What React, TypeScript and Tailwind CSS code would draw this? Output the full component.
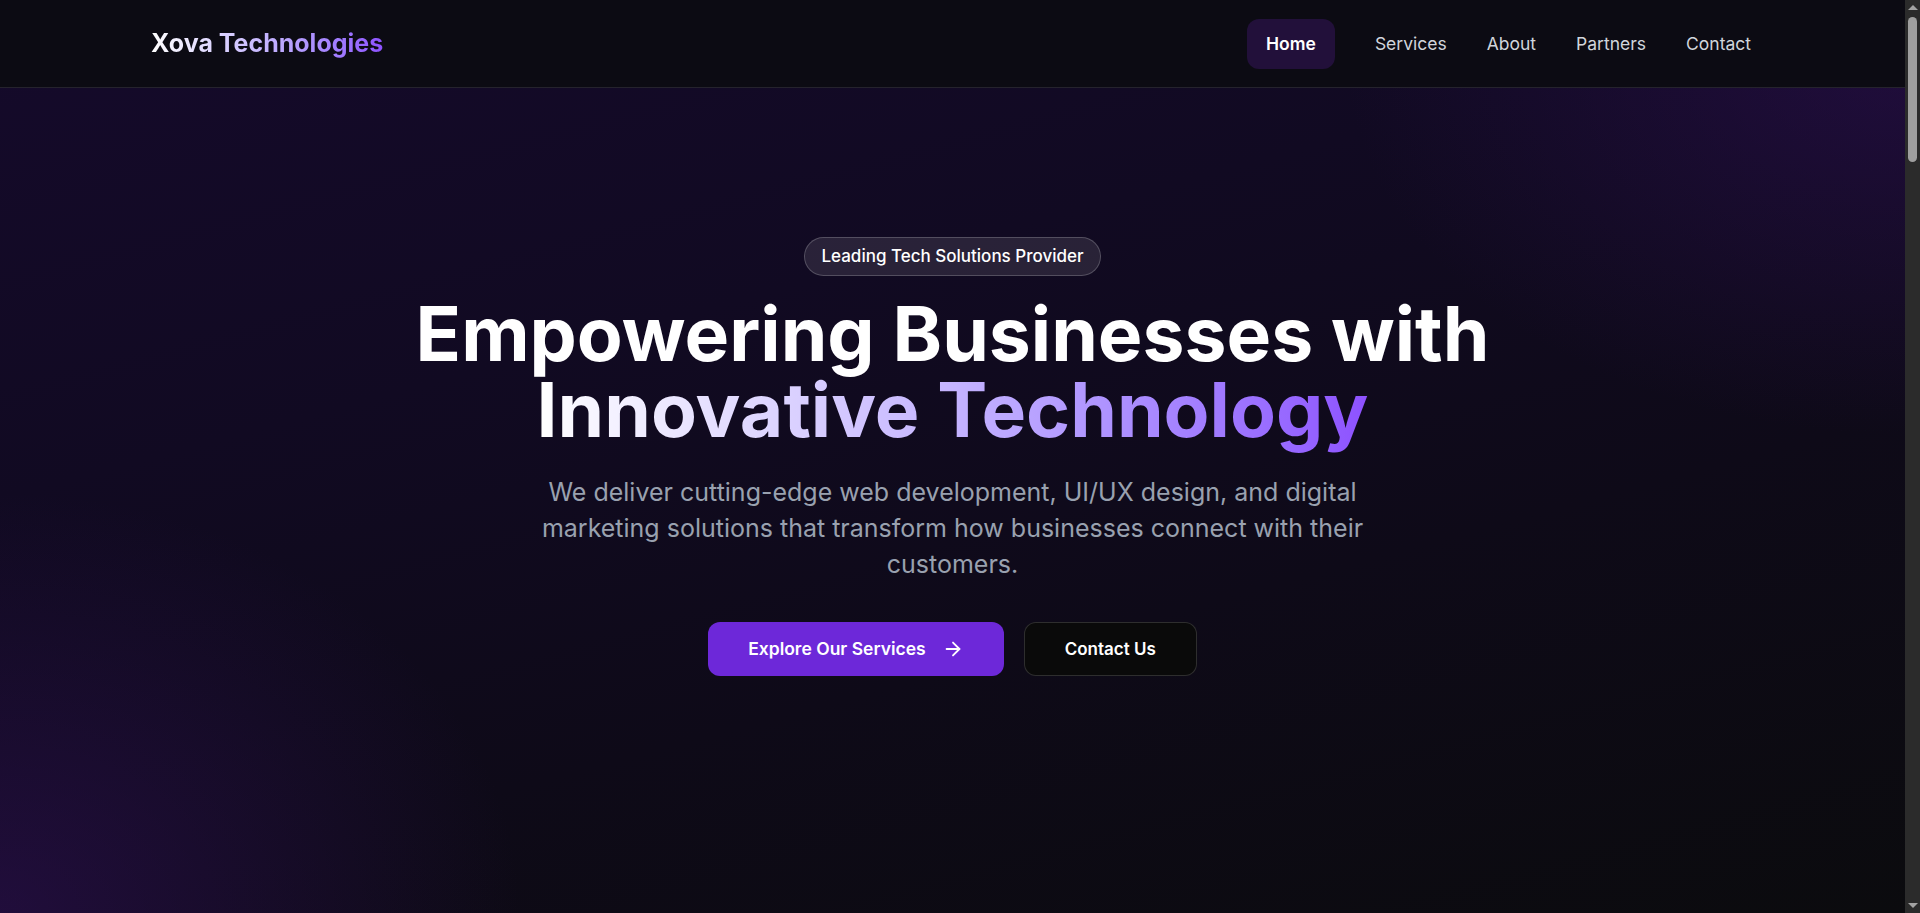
import React from "react";
import { ArrowRight } from "lucide-react";

const navItems = ["Home", "Services", "About", "Partners", "Contact"];

function FakeScrollbar() {
  return (
    <div className="fixed top-0 right-0 bottom-0 z-[60] flex w-[15px] flex-col items-center bg-[#2b2b2b]">
      <div className="mt-[5px] h-0 w-0 border-x-[5px] border-b-[5px] border-x-transparent border-b-[#a3a3a3]" />
      <div className="mt-[7px] h-[145px] w-[9px] rounded-full bg-[#9f9f9f]" />
      <div className="flex-1" />
      <div className="mb-[5px] h-0 w-0 border-x-[5px] border-t-[5px] border-x-transparent border-t-[#a3a3a3]" />
    </div>
  );
}

export default function App() {
  return (
    <div className="min-h-screen bg-[#0b0a10] pr-[15px] font-['Inter','Liberation_Sans',sans-serif] text-white">
      <FakeScrollbar />
      <header className="fixed top-0 left-0 right-[15px] z-50 h-[88px] border-b border-[#25232d] bg-[#0c0b13]">
        <div className="flex h-full items-center justify-between pl-[151px] pr-[134px]">
          <a className="bg-gradient-to-r from-white via-violet-300 to-violet-500 bg-clip-text text-[25px] font-bold text-transparent">
            Xova Technologies
          </a>
          <nav className="flex items-center">
            {navItems.map((item) =>
              item === "Home" ? (
                <a
                  key={item}
                  className="mr-5 rounded-xl bg-[#22103a] px-[19px] py-[11px] text-[17.5px] font-semibold leading-7 text-white"
                >
                  {item}
                </a>
              ) : (
                <a key={item} className="px-5 py-[11px] text-[17.5px] leading-7 text-gray-300">
                  {item}
                </a>
              )
            )}
          </nav>
        </div>
      </header>

      <section className="flex min-h-screen items-center justify-center bg-[radial-gradient(ellipse_520px_420px_at_0%_100%,rgba(48,16,88,0.55),transparent),radial-gradient(ellipse_560px_380px_at_100%_6%,rgba(48,16,88,0.5),transparent),linear-gradient(165deg,#150a2b_0%,#110a22_35%,#0e0a18_65%,#0b0b0e_100%)]">
        <div className="flex flex-col items-center text-center">
          <span className="mb-5 rounded-full border border-white/20 bg-white/10 px-4 py-1.5 text-[17px] font-medium text-white">
            Leading Tech Solutions Provider
          </span>
          <h1 className="text-[75px] font-bold leading-[76px]">
            <span className="block text-white">Empowering Businesses with</span>
            <span className="-mb-3 inline-block bg-gradient-to-r from-white via-violet-300 to-violet-500 bg-clip-text pb-3 text-transparent">
              Innovative Technology
            </span>
          </h1>
          <p className="mt-[26px] max-w-[870px] text-[25px] leading-[36px] text-gray-400">
            We deliver cutting-edge web development, UI/UX design, and digital marketing solutions that
            transform how businesses connect with their customers.
          </p>
          <div className="mt-10 flex items-center gap-5">
            <a className="flex items-center gap-4 rounded-xl bg-[#6d28d9] px-10 py-[13px] text-[17.5px] font-semibold leading-7 text-white">
              Explore Our Services
              <ArrowRight size={22} strokeWidth={2} />
            </a>
            <a className="rounded-xl border border-white/15 bg-[#0a0a0a] px-10 py-3 text-[17px] font-semibold leading-7 text-white">
              Contact Us
            </a>
          </div>
        </div>
      </section>

      <div className="h-[4600px] bg-[#0b0a10]" />
    </div>
  );
}
